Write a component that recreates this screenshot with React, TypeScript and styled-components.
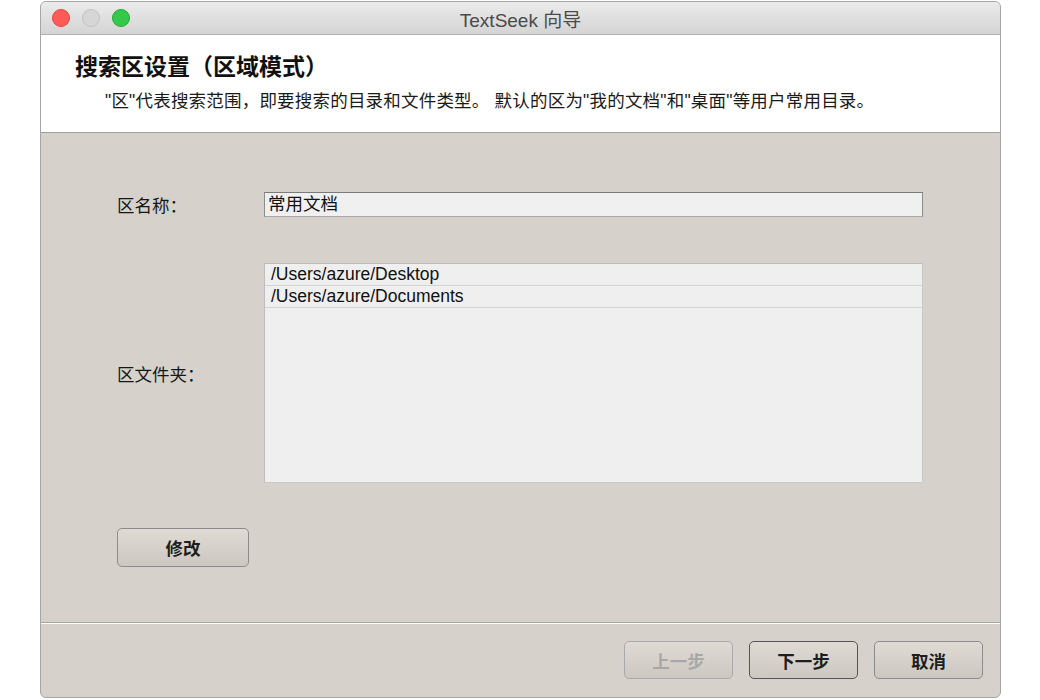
import React from "react";
import styled, { createGlobalStyle } from "styled-components";

const GlobalStyle = createGlobalStyle`
  html, body {
    margin: 0;
    padding: 0;
    background: #ffffff;
  }
  body {
    font-family: "Liberation Sans", "Noto Sans CJK SC", sans-serif;
    color: #1a1a1a;
  }
  * { box-sizing: border-box; }
`;

const Page = styled.div`
  width: 1040px;
  height: 700px;
  padding: 1px 39px 2px 40px;
`;

const Window = styled.div`
  width: 961px;
  height: 697px;
  border: 1px solid #a6a6a6;
  border-radius: 6px;
  overflow: hidden;
  display: flex;
  flex-direction: column;
  background: #d6d2cb;
`;

const TitleBar = styled.div`
  height: 33px;
  flex: none;
  display: grid;
  grid-template-columns: 1fr auto 1fr;
  align-items: center;
  background: linear-gradient(#ebebeb, #d4d4d4);
  border-bottom: 1px solid #b1b1b1;
`;

const Lights = styled.div`
  display: flex;
  gap: 12px;
  padding-left: 11px;
`;

const Light = styled.span<{ $fill: string; $edge: string }>`
  width: 18px;
  height: 18px;
  border-radius: 50%;
  background: ${(p) => p.$fill};
  border: 1px solid ${(p) => p.$edge};
`;

const WindowTitle = styled.div`
  font-size: 19px;
  color: #4a4a4a;
  white-space: nowrap;
`;

const Header = styled.div`
  flex: none;
  height: 98px;
  background: #ffffff;
  border-bottom: 1px solid #9e9e9e;
  padding: 16px 0 0 34px;
`;

const HeaderTitle = styled.div`
  font-size: 23px;
  font-weight: bold;
  line-height: 32px;
  color: #111;
`;

const HeaderText = styled.div`
  margin-top: 6px;
  margin-left: 30px;
  font-size: 17.5px;
  letter-spacing: 0.2px;
  line-height: 24px;
  color: #1a1a1a;
  white-space: nowrap;
`;

const Content = styled.div`
  flex: 1;
  padding: 59px 77px 0 76px;
  display: flex;
  flex-direction: column;
`;

const Form = styled.div`
  display: grid;
  grid-template-columns: 147px 1fr;
  row-gap: 46px;
  align-items: center;
`;

const Label = styled.div`
  font-size: 17.5px;
  color: #161616;
`;

const Field = styled.div`
  height: 25px;
  background: #f0f0f0;
  border: 1px solid #8c8c8c;
  border-top-color: #7a7a7a;
  border-bottom-color: #a8a8a8;
  padding-left: 3px;
  font-size: 17.5px;
  line-height: 23px;
  color: #111;
`;

const List = styled.div`
  height: 220px;
  background: #efefef;
  border: 1px solid #bdbdbd;
  border-right-color: #c8c8c8;
  border-bottom-color: #c8c8c8;
`;

const ListRow = styled.div`
  height: 22px;
  border-bottom: 1px solid #d3d3d3;
  padding-left: 6px;
  font-size: 17.5px;
  line-height: 21px;
  color: #111;
`;

const Button = styled.button<{ $default?: boolean }>`
  font-family: "Liberation Sans", "Noto Sans CJK SC", sans-serif;
  font-size: 17.5px;
  font-weight: 600;
  color: ${(p) => (p.disabled ? "#a7a7a7" : "#1e1e1e")};
  border: 1px solid ${(p) => (p.$default ? "#555555" : p.disabled ? "#a9a9a9" : "#8c8c8c")};
  border-radius: 5px;
  background: linear-gradient(#dfdbd4, #ccc8c1);
  padding: 0;
  cursor: default;
`;

const EditButton = styled(Button)`
  width: 132px;
  height: 39px;
  margin-top: 45px;
`;

const Footer = styled.div`
  flex: none;
  height: 75px;
  border-top: 1px solid #aaa69f;
  box-shadow: inset 0 1px 0 #ffffff;
  display: flex;
  justify-content: flex-end;
  align-items: flex-start;
  gap: 16px;
  padding: 18px 17px 0 0;
`;

const NavButton = styled(Button)`
  width: 109px;
  height: 38px;
`;

export default function App() {
  return (
    <>
      <GlobalStyle />
      <Page>
        <Window>
          <TitleBar>
            <Lights>
              <Light $fill="#fc5b57" $edge="#e3463f" />
              <Light $fill="#d6d6d6" $edge="#c2c2c2" />
              <Light $fill="#35c94a" $edge="#25a834" />
            </Lights>
            <WindowTitle>TextSeek 向导</WindowTitle>
            <div />
          </TitleBar>
          <Header>
            <HeaderTitle>搜索区设置（区域模式）</HeaderTitle>
            <HeaderText>
              "区"代表搜索范围，即要搜索的目录和文件类型。 默认的区为"我的文档"和"桌面"等用户常用目录。
            </HeaderText>
          </Header>
          <Content>
            <Form>
              <Label>区名称：</Label>
              <Field>常用文档</Field>
              <Label>区文件夹：</Label>
              <List>
                <ListRow>/Users/azure/Desktop</ListRow>
                <ListRow>/Users/azure/Documents</ListRow>
              </List>
            </Form>
            <div>
              <EditButton>修改</EditButton>
            </div>
          </Content>
          <Footer>
            <NavButton disabled>上一步</NavButton>
            <NavButton $default>下一步</NavButton>
            <NavButton>取消</NavButton>
          </Footer>
        </Window>
      </Page>
    </>
  );
}
